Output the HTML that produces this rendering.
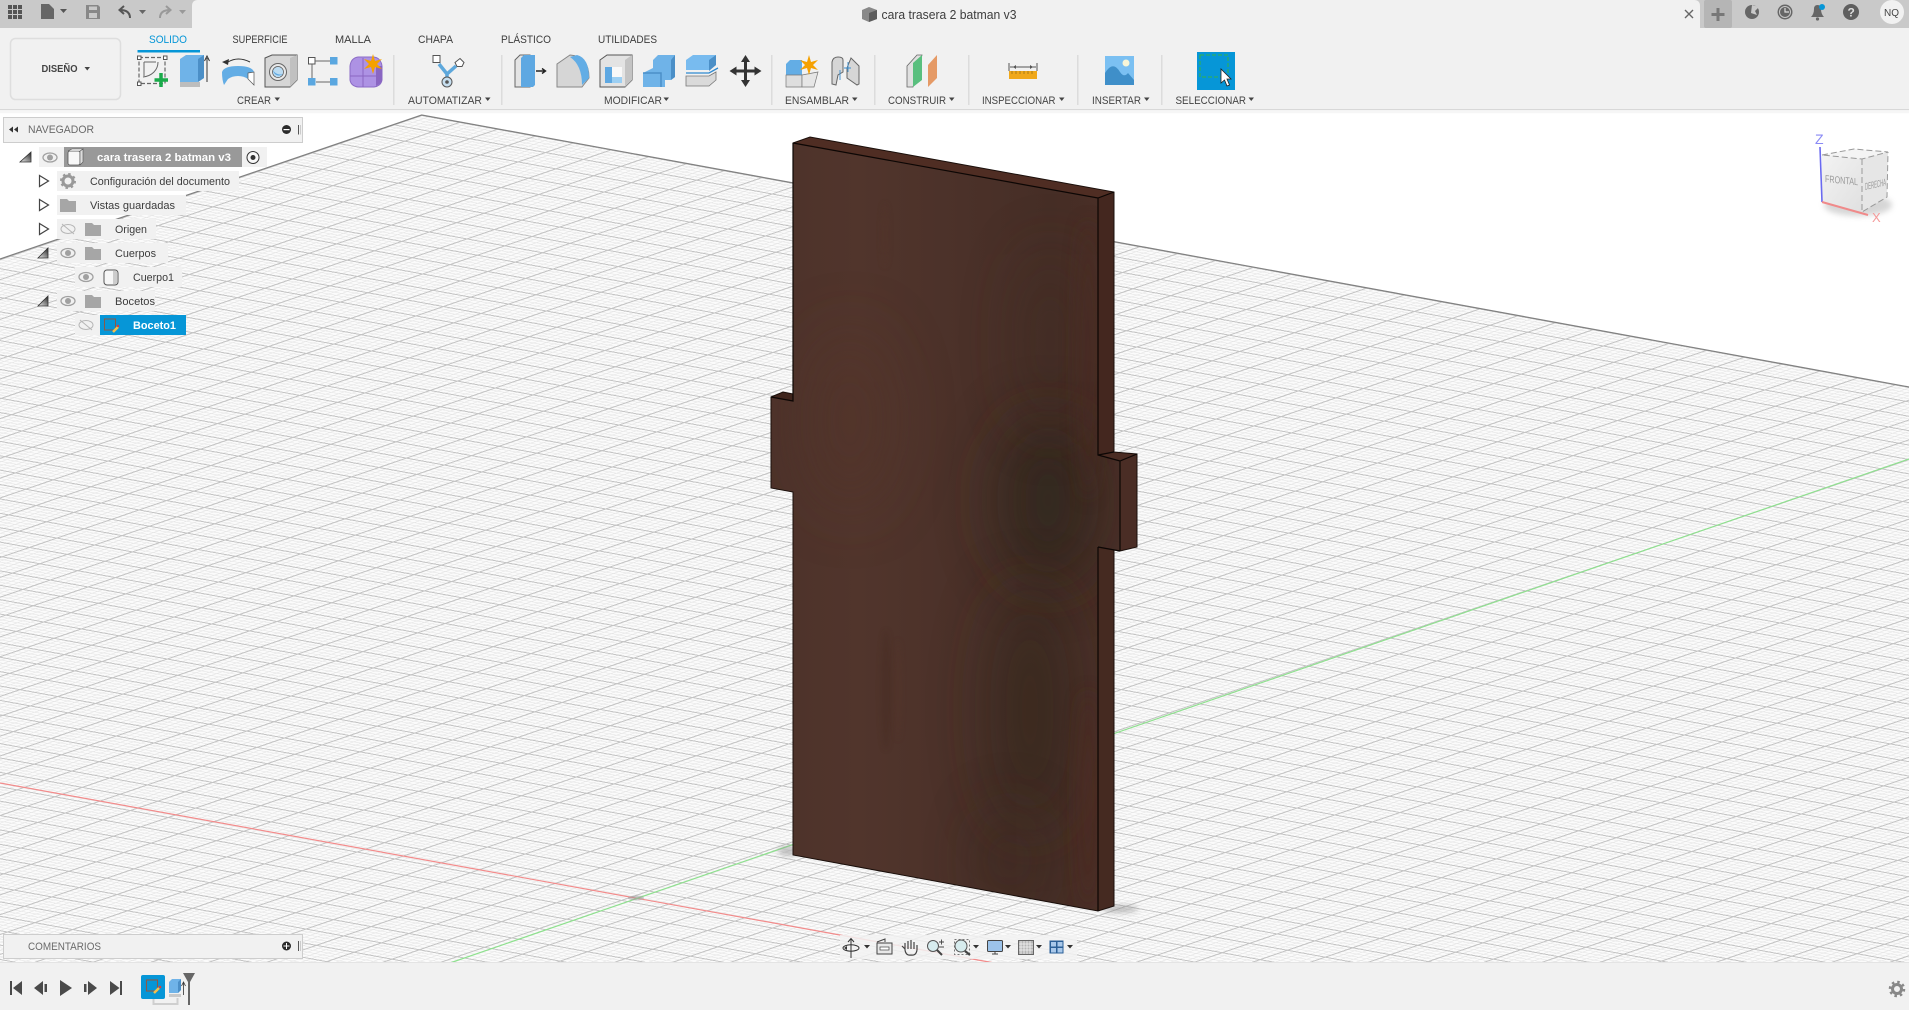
<!DOCTYPE html>
<html lang="es">
<head>
<meta charset="utf-8">
<title>cara trasera 2 batman v3</title>
<style>
html,body{margin:0;padding:0;background:#fff;overflow:hidden}
svg{display:block;position:absolute;left:0;top:0}
text{font-family:"Liberation Sans",sans-serif;fill:#3d3d3d}
.l{font-size:11px;fill:#444}
.n{font-size:11px;fill:#3c3c3c}
</style>
</head>
<body>
<svg width="1909" height="1010" viewBox="0 0 1909 1010" xmlns="http://www.w3.org/2000/svg">
<defs>
<pattern id="grid" patternUnits="userSpaceOnUse" width="1" height="1" patternTransform="matrix(37.78 6.91 -27.4 9.38 421.7 115)">
<rect width="1" height="1" fill="#fbfbfb"/>
<g fill="#e5e5e5">
<rect x="0" y=".2" width="1" height=".04"/><rect x="0" y=".4" width="1" height=".04"/><rect x="0" y=".6" width="1" height=".04"/><rect x="0" y=".8" width="1" height=".04"/>
<rect x=".2" y="0" width=".03" height="1"/><rect x=".4" y="0" width=".03" height="1"/><rect x=".6" y="0" width=".03" height="1"/><rect x=".8" y="0" width=".03" height="1"/>
</g>
<g fill="#c4c4c4">
<rect x="0" y="0" width="1" height=".07"/>
<rect x="0" y="0" width=".055" height="1"/>
</g>
</pattern>
<linearGradient id="wood" x1="0" x2="1" y1="0" y2="0">
<stop offset="0" stop-color="#4d322a"/>
<stop offset=".25" stop-color="#51352c"/>
<stop offset=".55" stop-color="#4b3129"/>
<stop offset=".8" stop-color="#462e26"/>
<stop offset="1" stop-color="#4b2f27"/>
</linearGradient>
<filter id="b" filterUnits="userSpaceOnUse" x="650" y="50" width="600" height="1000"><feGaussianBlur stdDeviation="30"/></filter>
<filter id="b2" filterUnits="userSpaceOnUse" x="650" y="50" width="600" height="1000"><feGaussianBlur stdDeviation="9"/></filter>
<filter id="b3" filterUnits="userSpaceOnUse" x="650" y="50" width="1259" height="1000"><feGaussianBlur stdDeviation="3"/></filter>
<clipPath id="face"><polygon points="793,143 1098,198 1098,455 1120,461 1120,551 1098,547 1098,911 793,855 793,492 771,488 771,397 793,401"/></clipPath>
<linearGradient id="tri" x1="0" x2="1" y1="1" y2="0"><stop offset="0" stop-color="#eee"/><stop offset="1" stop-color="#222"/></linearGradient>
<linearGradient id="cubef" x1="0" x2="1" y1="0" y2="1"><stop offset="0" stop-color="#f3f3f3"/><stop offset="1" stop-color="#e0e0e0"/></linearGradient>
</defs>

<!-- viewport -->
<rect width="1909" height="1010" fill="#fff"/>
<polygon points="421.7,115 0,259 0,1010 1909,1010 1909,387" fill="url(#grid)"/>
<path d="M0,259 L421.7,115 L1909,387" fill="none" stroke="#808080" stroke-width="1.2"/>
<!-- axes -->
<path d="M0,783 L1000,964" stroke="#f28b8b" stroke-width="1.2" fill="none"/>
<path d="M447,964 L1909,459" stroke="#8fe08f" stroke-width="1.2" fill="none"/>
<ellipse cx="636" cy="898" rx="8" ry="2.500" fill="#999" opacity=".5"/>
<!-- shadows -->
<ellipse cx="1120" cy="909" rx="18" ry="3.500" fill="#888" opacity=".55" filter="url(#b3)"/>
<ellipse cx="788" cy="851" rx="10" ry="5" fill="#888" opacity=".5" filter="url(#b3)"/>

<!-- board -->
<polygon points="793,143 810,137 1114,192 1098,198" fill="#4f2d23"/>
<polygon points="771,397 783,392 793,394 793,401" fill="#3f251d"/>
<polygon points="1098,198 1114,192 1114,452 1098,455" fill="#44271f"/>
<polygon points="1098,455 1114,452 1137,454 1120,461" fill="#4b2c23"/>
<polygon points="1120,461 1137,454 1137,547 1120,551" fill="#4a2d25"/>
<polygon points="1098,547 1114,550 1114,906 1098,911" fill="#452a21"/>
<polygon points="793,143 1098,198 1098,455 1120,461 1120,551 1098,547 1098,911 793,855 793,492 771,488 771,397 793,401" fill="url(#wood)"/>
<g clip-path="url(#face)">
<ellipse cx="1048" cy="500" rx="52" ry="85" fill="#2f251b" opacity=".72" filter="url(#b)"/>
<ellipse cx="1030" cy="710" rx="40" ry="125" fill="#33261d" opacity=".6" filter="url(#b)"/>
<ellipse cx="1010" cy="860" rx="28" ry="55" fill="#35261d" opacity=".45" filter="url(#b)"/>
<ellipse cx="1050" cy="340" rx="30" ry="95" fill="#3e2a21" opacity=".45" filter="url(#b)"/>
<ellipse cx="1088" cy="800" rx="9" ry="110" fill="#4e2c24" opacity=".7" filter="url(#b2)"/>
<ellipse cx="1088" cy="360" rx="10" ry="140" fill="#4a2a21" opacity=".6" filter="url(#b2)"/>
<ellipse cx="850" cy="420" rx="42" ry="90" fill="#54362c" opacity=".5" filter="url(#b)"/>
<ellipse cx="886" cy="690" rx="5" ry="60" fill="#3f271f" opacity=".3" filter="url(#b3)"/>
<ellipse cx="898" cy="690" rx="3" ry="50" fill="#54352b" opacity=".45" filter="url(#b3)"/>
<ellipse cx="885" cy="235" rx="3" ry="32" fill="#54352b" opacity=".45" filter="url(#b3)"/>
</g>
<path d="M793,143 L810,137 L1114,192 L1114,452 L1137,454 L1137,547 L1120,551 L1114,550 L1114,906 L1098,911 L793,855 L793,492 L771,488 L771,397 L783,392 L793,394Z" fill="none" stroke="#1a0f0b" stroke-width="1"/>
<path d="M793,143 L1098,198 L1114,192 M1098,198 L1098,455 L1120,461 L1137,454 M1120,461 L1120,551 M1098,547 L1120,551 M1098,547 L1098,911 M793,143 L793,401 L771,397 M1098,455 L1114,452" fill="none" stroke="#0c0604" stroke-width="1.2"/>

<!-- view cube -->
<ellipse cx="1858" cy="205" rx="34" ry="11" fill="#999" opacity=".4" filter="url(#b3)"/>
<polygon points="1822,155 1854,149 1888,152 1862,159" fill="#f4f4f4"/>
<polygon points="1822,155 1862,159 1862,212 1822,202" fill="url(#cubef)"/>
<polygon points="1862,159 1888,152 1887,197 1862,212" fill="#e6e6e6"/>
<path d="M1822,155 L1854,149 L1888,152 L1862,159 Z M1862,159 L1862,212 L1887,197 L1888,152" fill="none" stroke="#999" stroke-width="1" stroke-dasharray="6 3"/>
<text transform="matrix(1 .1 0 1 1825 182)" font-size="10" textLength="33" lengthAdjust="spacingAndGlyphs" style="fill:#999">FRONTAL</text>
<text transform="matrix(1 -.22 0 1 1865 190)" font-size="10" textLength="21" lengthAdjust="spacingAndGlyphs" style="fill:#999">DERECHA</text>
<path d="M1820,147 L1822,202" stroke="#6a6af0" stroke-width="1.600" fill="none"/>
<path d="M1822,202 L1868,215" stroke="#f08a8a" stroke-width="2" fill="none"/>
<text x="1815" y="144" font-size="14" style="fill:#8a8af5">Z</text>
<text x="1872" y="222" font-size="13" style="fill:#f59a9a">X</text>

<!-- toolbar -->
<rect y="0" width="1909" height="109" fill="#f1f1f1"/>
<rect y="109" width="1909" height="1.200" fill="#d8d8d8"/>
<rect y="110.200" width="1909" height="3" fill="#f6f6f6"/>
<path d="M0,0 H1909 V28 H1700 V6 Q1700,0 1694,0 H198 Q192,0 192,6 V28 H0 Z" fill="#c9c9c9"/>
<rect x="1704" y="0" width="28" height="28" fill="#b5b5b5" rx="2"/>

<!-- title bar left icons -->
<g fill="#555">
<rect x="8" y="5" width="4" height="4"/><rect x="13" y="5" width="4" height="4"/><rect x="18" y="5" width="4" height="4"/>
<rect x="8" y="10" width="4" height="4"/><rect x="13" y="10" width="4" height="4"/><rect x="18" y="10" width="4" height="4"/>
<rect x="8" y="15" width="4" height="4"/><rect x="13" y="15" width="4" height="4"/><rect x="18" y="15" width="4" height="4"/>
<path d="M41,4 H49 L54,9 V19 H41 Z" fill="#666"/>
<path d="M60,9 H67 L63.500,13 Z"/>
<path d="M86,5 H98 L100,7 V19 H86 Z M89,6.500 V10 H97 V6.500 Z M89,13 V18 H97 V13 Z" fill="#888" fill-rule="evenodd"/>
<path d="M139,10 H146 L142.500,14 Z" fill="#666"/>
<path d="M179,10 H186 L182.500,14 Z" fill="#999"/>
</g>
<path d="M130,18 C130,12 126,10 120,10 M124,6 L119.500,10 L124,14" fill="none" stroke="#555" stroke-width="2"/>
<path d="M160,18 C160,12 164,10 170,10 M166,6 L170.500,10 L166,14" fill="none" stroke="#999" stroke-width="2"/>

<!-- title -->
<path d="M862,10 L869,7 L877,10 V19 L869,22 L862,19 Z" fill="#888"/>
<path d="M869,13 L877,10 V19 L869,22 Z" fill="#5c5c5c"/>
<text x="881.500" y="19" font-size="12.500" textLength="135" lengthAdjust="spacingAndGlyphs">cara trasera 2 batman v3</text>
<path d="M1685,10 L1693,18 M1693,10 L1685,18" stroke="#666" stroke-width="1.400"/>
<path d="M1718,8 V21 M1711.500,14.500 H1724.500" stroke="#777" stroke-width="3"/>

<!-- title bar right icons -->
<circle cx="1752" cy="12" r="7" fill="#666"/>
<path d="M1752,5 L1759,7 L1755,11 L1757,15 L1751,13Z" fill="#c9c9c9"/>
<circle cx="1785" cy="12" r="7.500" fill="#666"/><circle cx="1785" cy="12" r="5.500" fill="none" stroke="#c9c9c9"/><path d="M1785,8 V12 H1789" stroke="#ddd" fill="none" stroke-width="1.200"/>
<path d="M1811,17 Q1814,14 1814,9 Q1814,5 1817.500,5 Q1821,5 1821,9 Q1821,14 1824,17 Z" fill="#666"/><circle cx="1817.500" cy="19" r="1.600" fill="#666"/><circle cx="1822" cy="7" r="3" fill="#0696d7"/>
<circle cx="1851" cy="12" r="8" fill="#5f5f5f"/><text x="1847.500" y="16.500" font-size="12" font-weight="bold" style="fill:#ddd">?</text>
<circle cx="1892" cy="12" r="12" fill="#f1f1f1"/><text x="1884" y="16" font-size="10.500" textLength="15" lengthAdjust="spacingAndGlyphs" style="fill:#444">NQ</text>

<!-- design button -->
<rect x="10.500" y="38.500" width="110" height="61" rx="5" fill="#f1f1f1" stroke="#dedede" stroke-width="1.500"/>
<text x="41.500" y="72" font-size="10.500" font-weight="bold" textLength="36" lengthAdjust="spacingAndGlyphs" style="fill:#444">DISEÑO</text>
<path d="M84.500,67 H90 L87.250,70.500 Z" fill="#444"/>

<!-- tabs -->
<text x="149" y="43" class="n" textLength="38" lengthAdjust="spacingAndGlyphs" style="fill:#0696d7">SOLIDO</text>
<rect x="137.500" y="50" width="62.500" height="2.500" fill="#0696d7"/>
<text x="232.500" y="43" class="n" textLength="55" lengthAdjust="spacingAndGlyphs">SUPERFICIE</text>
<text x="335" y="43" class="n" textLength="36" lengthAdjust="spacingAndGlyphs">MALLA</text>
<text x="418" y="43" class="n" textLength="35" lengthAdjust="spacingAndGlyphs">CHAPA</text>
<text x="501" y="43" class="n" textLength="50" lengthAdjust="spacingAndGlyphs">PLÁSTICO</text>
<text x="598" y="43" class="n" textLength="59" lengthAdjust="spacingAndGlyphs">UTILIDADES</text>

<!-- separators -->
<g fill="#dcdcdc">
<rect x="393" y="55" width="1.500" height="50"/><rect x="501" y="55" width="1.500" height="50"/><rect x="771" y="55" width="1.500" height="50"/><rect x="874" y="55" width="1.500" height="50"/><rect x="968" y="55" width="1.500" height="50"/><rect x="1077" y="55" width="1.500" height="50"/><rect x="1161" y="55" width="1.500" height="50"/>
</g>

<!-- group labels -->
<g>
<text x="237" y="104" class="l" textLength="34" lengthAdjust="spacingAndGlyphs">CREAR</text><path d="M274.500,97.500 H280 L277.250,101 Z" fill="#444"/>
<text x="408" y="104" class="l" textLength="74" lengthAdjust="spacingAndGlyphs">AUTOMATIZAR</text><path d="M485,97.500 H490.500 L487.750,101 Z" fill="#444"/>
<text x="604" y="104" class="l" textLength="58" lengthAdjust="spacingAndGlyphs">MODIFICAR</text><path d="M663.500,97.500 H669 L666.250,101 Z" fill="#444"/>
<text x="785" y="104" class="l" textLength="64" lengthAdjust="spacingAndGlyphs">ENSAMBLAR</text><path d="M852,97.500 H857.500 L854.750,101 Z" fill="#444"/>
<text x="888" y="104" class="l" textLength="58" lengthAdjust="spacingAndGlyphs">CONSTRUIR</text><path d="M949,97.500 H954.500 L951.750,101 Z" fill="#444"/>
<text x="982" y="104" class="l" textLength="73.500" lengthAdjust="spacingAndGlyphs">INSPECCIONAR</text><path d="M1059,97.500 H1064.500 L1061.750,101 Z" fill="#444"/>
<text x="1092" y="104" class="l" textLength="49" lengthAdjust="spacingAndGlyphs">INSERTAR</text><path d="M1144,97.500 H1149.500 L1146.750,101 Z" fill="#444"/>
<text x="1175.500" y="104" class="l" textLength="70.500" lengthAdjust="spacingAndGlyphs">SELECCIONAR</text><path d="M1248.500,97.500 H1254 L1251.250,101 Z" fill="#444"/>
</g>

<!-- Sketch -->
<rect x="139" y="57.500" width="26" height="26" fill="none" stroke="#666" stroke-width="1.200" stroke-dasharray="4 2"/>
<g fill="#fff" stroke="#555"><rect x="137.500" y="56" width="3.500" height="3.500"/><rect x="163.500" y="56" width="3.500" height="3.500"/><rect x="137.500" y="82" width="3.500" height="3.500"/></g>
<path d="M143,77 C152,76 158,70 158,62 M144,62 H156 M144,62 V76" fill="none" stroke="#666" stroke-width="1"/>
<path d="M161,73 V87 M154.500,80 H168" stroke="#1aab4a" stroke-width="3.500"/>
<!-- Extrude -->
<polygon points="180,59 186,55 204,55 204,78 198,82 180,82" fill="#6fb3e8"/>
<polygon points="198,59 204,55 204,78 198,82" fill="#4b8fc7"/>
<rect x="180" y="82" width="20" height="5" fill="#bdbdbd"/>
<path d="M207,82 V58 M204.500,61 L207,56 L209.500,61" stroke="#333" stroke-width="1" fill="none"/>
<!-- Revolve -->
<path d="M222,72 Q224,66 238,66 Q252,66 254,72 L254,85 L248,79 Q244,76 238,76 Q232,76 228,79 L224,85 Q222,80 222,72Z" fill="#63ade5"/>
<path d="M228,62 Q238,56 250,62" fill="none" stroke="#333" stroke-width="1"/>
<path d="M222,62 L229,59 L228,65Z" fill="#333"/>
<path d="M248,73 L254,72 V85 L248,79Z" fill="#fff" stroke="#555" stroke-width=".7"/>
<!-- Hole -->
<polygon points="265,58 272,55 297,55 297,80 290,87 265,87" fill="#d6d6d6" stroke="#555"/>
<polygon points="290,58 297,55 297,80 290,87" fill="#c0c0c0"/>
<circle cx="278" cy="72" r="8.500" fill="#e8e8e8" stroke="#666"/><circle cx="278" cy="72" r="5.500" fill="#bcdcf2" stroke="#555" stroke-width=".7"/><path d="M273,70 A6,6 0 0 0 283,74 A8,8 0 0 1 273,70Z" fill="#5ea8e2"/>
<!-- rect pattern -->
<rect x="308.500" y="57.500" width="6.500" height="6.500" fill="#fff" stroke="#555"/>
<rect x="330" y="57" width="7.500" height="7.500" fill="#5aa7e0"/>
<rect x="308" y="78" width="7.500" height="7.500" fill="#5aa7e0"/>
<rect x="330" y="78" width="7.500" height="7.500" fill="#5aa7e0"/>
<path d="M315,61 H330 M312,64 V78 M316,82 H330" stroke="#666" stroke-width="1"/>
<!-- Purple -->
<path d="M350,66 Q351,58 358,57 H374 Q381,58 382,66 V80 Q381,86 374,87 H358 Q351,86 350,80 Z" fill="#ad92e4" stroke="#8c6cc6"/>
<path d="M376,66 H382 V80 Q381,84 376,86Z" fill="#8a66c2"/>
<path d="M350,76 H376 M363,58 V87" stroke="#8a66c2" stroke-width="1"/>
<path d="M373,54 L375,61 L382,59 L377,64 L382,69 L375,67 L373,74 L371,67 L364,69 L369,64 L364,59 L371,61Z" fill="#f5a100"/>
<!-- Automate -->
<rect x="433" y="55.500" width="7" height="7" fill="#fff" stroke="#555"/>
<path d="M460,58.500 l4,4 l-2,4 l-5,0 l-2,-4Z" fill="#fff" stroke="#555"/>
<path d="M439,64 L447,74 L456,66 M447,74 V80" fill="none" stroke="#5ea8dc" stroke-width="3.500"/>
<circle cx="447" cy="82" r="5" fill="#c7dff0" stroke="#555"/><circle cx="447" cy="82" r="1.800" fill="#555"/>
<!-- Press pull -->
<polygon points="515,60 520,55 530,55 530,87 515,87" fill="#e4e4e4" stroke="#666"/>
<polygon points="521,87 521,58 524,55 535,55 535,85 533,87" fill="#5ea8e2"/>
<path d="M536,71 H545 M542,68.500 L545.500,71 L542,73.500" stroke="#222" stroke-width="1.400" fill="none"/>
<!-- Fillet -->
<path d="M557,87 V64 L570,55 Q589,56 589,78 L582,87 Z" fill="#d6d6d6" stroke="#888"/>
<path d="M570,57 L577,55 Q589,58 589,78 L582,85 Q582,65 570,57Z" fill="#63ade5"/>
<!-- Shell -->
<polygon points="600,60 607,55 632,55 632,80 625,87 600,87" fill="#e3e3e3" stroke="#555"/>
<polygon points="625,60 632,55 632,80 625,87" fill="#c4c4c4"/>
<rect x="605" y="67" width="17" height="16" fill="#f8f8f8"/>
<path d="M605,67 H612 V77 H622 V83 H605Z" fill="#5ea8e2"/>
<path d="M612,77 H622 V83 H612Z" fill="#9ccff3"/>
<!-- Combine -->
<polygon points="653,60 658,55 675,55 675,77 671,80 665,80 665,87 643,87 643,73 653,68" fill="#6fb3e8"/>
<polygon points="671,60 675,55 675,77 671,80" fill="#4b8fc7"/>
<path d="M643,73 H661 V87" fill="none" stroke="#4b8fc7" stroke-width="1.500"/>
<!-- Offset -->
<polygon points="686,60 693,55 716,55 716,65 709,70 686,70" fill="#78bbef"/>
<polygon points="709,60 716,55 716,65 709,71" fill="#4b8fc7"/>
<polygon points="686,76 709,76 716,72 716,80 709,86 686,86" fill="#dadada" stroke="#777" stroke-width=".8"/>
<path d="M686,73 H709 L718,68" stroke="#2f89cf" stroke-width="1.300" fill="none"/>
<!-- Move -->
<path d="M745.500,55 L750,62 H747 V69.500 H754.500 V66.500 L761.500,71 L754.500,75.500 V72.500 H747 V80 H750 L745.500,87 L741,80 H744 V72.500 H736.500 V75.500 L729.500,71 L736.500,66.500 V69.500 H744 V62 H741Z" fill="#333"/>
<!-- Assemble -->
<polygon points="786,64 790,60 802,60 802,75 786,75" fill="#63ade5"/>
<polygon points="786,75 802,75 802,87 786,87" fill="#dedede" stroke="#777" stroke-width=".7"/>
<polygon points="802,75 818,72 814,87 802,87" fill="#e6e6e6" stroke="#777" stroke-width=".7"/>
<path d="M809,55 L811,62 L818,60 L813,65 L818,70 L811,68 L809,75 L807,68 L800,70 L805,65 L800,60 L807,62Z" fill="#f5a100"/>
<!-- Joint -->
<path d="M832,84 V62 Q833,57 838,57 Q843,57 843,60 V72 L838,75 L836,85Z" fill="#d6d6d6" stroke="#666"/>
<path d="M859,84 V66 L851,58 L847,68 V78 L857,85Z" fill="#d6d6d6" stroke="#666"/>
<path d="M840,70 V80 M848,62 V72 M844,68 H851" stroke="#3a8ecf" stroke-width=".9"/>
<!-- Construct -->
<polygon points="907,66 917,55 922,55 913,87 907,87" fill="#e0e0e0" stroke="#666" stroke-width=".8"/>
<polygon points="913,87 913,63 922,55 922,80" fill="#59bf7e"/>
<polygon points="928,87 928,65 937,55 937,78" fill="#e59a66"/>
<!-- Inspect -->
<rect x="1009" y="71" width="28" height="8" fill="#f0a81a"/>
<path d="M1009,63 V71 M1037,63 V71 M1010,67 H1036" stroke="#555" stroke-width="1" fill="none"/>
<path d="M1013,67 l3,-2 v4Z M1033,67 l-3,-2 v4Z" fill="#555"/>
<path d="M1012,71 v3 M1016,71 v3 M1020,71 v3 M1024,71 v3 M1028,71 v3 M1032,71 v3" stroke="#8a6a14" stroke-width=".7"/>
<!-- Insert -->
<rect x="1105" y="56" width="29" height="29" fill="#7bc0f2"/>
<path d="M1105,85 V73 Q1113,60 1120,72 Q1124,78 1128,73 L1134,80 V85Z" fill="#3f8fc9"/>
<circle cx="1126" cy="63" r="3.500" fill="#f8f6d8"/>
<!-- Select -->
<rect x="1197" y="52" width="38" height="38" fill="#0696d7"/>
<rect x="1200" y="55" width="28" height="22" fill="none" stroke="#36b24a" stroke-width="1" stroke-dasharray="4 2"/>
<path d="M1221,69 L1221,83 L1224.500,80 L1227,86 L1229.500,85 L1227,79 L1231,79Z" fill="#fff" stroke="#222" stroke-width=".8"/>

<!-- Navigator -->
<rect x="3.500" y="117.500" width="299" height="25" fill="#f1f1f1" stroke="#cdcdcd"/>
<path d="M13,126.500 L9,129.500 L13,132.500Z M18,126.500 L14,129.500 L18,132.500Z" fill="#333"/>
<text x="28" y="133" font-size="11" textLength="66" lengthAdjust="spacingAndGlyphs" style="fill:#6a6a6a">NAVEGADOR</text>
<circle cx="286.500" cy="129.500" r="4.500" fill="#2a2a2a"/><rect x="283.500" y="129" width="6" height="1.200" fill="#fff"/>
<path d="M298.500,125 V134.500" stroke="#555"/><path d="M300.500,125 V134.500" stroke="#ccc"/>

<!-- tree backgrounds -->
<g fill="#f1f1f1">
<rect x="39" y="147" width="228" height="20"/>
<rect x="57" y="171" width="182" height="20"/>
<rect x="57" y="195" width="129" height="20"/>
<rect x="57" y="219" width="99" height="20"/>
<rect x="57" y="243" width="111" height="20"/>
<rect x="75" y="267" width="107" height="20"/>
<rect x="57" y="291" width="98" height="20"/>
<rect x="75" y="315" width="25" height="20"/>
</g>
<!-- row 1 -->
<polygon points="20,162 31,162 31,152" fill="url(#tri)" stroke="#333" stroke-width=".8"/>
<g><ellipse cx="50" cy="157.500" rx="7" ry="4.500" fill="none" stroke="#a0a0a0" stroke-width="1.300"/><circle cx="50" cy="157.500" r="3" fill="#a0a0a0"/></g>
<rect x="64" y="147" width="178" height="20" fill="#999"/>
<rect x="68" y="151" width="12" height="14" rx="2" fill="#f8f8f8" stroke="#555" stroke-width=".8"/><path d="M80,151 L83,149 V162 L80,165Z" fill="#ddd" stroke="#555" stroke-width=".6"/>
<path d="M68,151 L72,149 H83 L80,151Z" fill="#fff" stroke="#555" stroke-width=".6"/>
<text x="97" y="161" font-size="11" font-weight="bold" textLength="134" lengthAdjust="spacingAndGlyphs" style="fill:#fff">cara trasera 2 batman v3</text>
<circle cx="253" cy="157.500" r="6" fill="#f8f8f8" stroke="#333"/><circle cx="253" cy="157.500" r="2.500" fill="#333"/>
<!-- row 2 -->
<polygon points="39.500,175.500 48.500,181 39.500,186.500" fill="#fff" stroke="#444" stroke-width="1.200"/>
<circle cx="68" cy="181" r="5" fill="none" stroke="#999" stroke-width="3"/><circle cx="68" cy="181" r="7" fill="none" stroke="#999" stroke-width="2" stroke-dasharray="2.500 3"/>
<text x="90" y="185" class="n" textLength="140" lengthAdjust="spacingAndGlyphs">Configuración del documento</text>
<!-- row 3 -->
<polygon points="39.500,199.500 48.500,205 39.500,210.500" fill="#fff" stroke="#444" stroke-width="1.200"/>
<path d="M60,199 H67 L69,201 H76 V212 H60Z" fill="#a6a6a6"/>
<text x="90" y="209" class="n" textLength="85" lengthAdjust="spacingAndGlyphs">Vistas guardadas</text>
<!-- row 4 -->
<polygon points="39.500,223.500 48.500,229 39.500,234.500" fill="#fff" stroke="#444" stroke-width="1.200"/>
<ellipse cx="68" cy="229" rx="7" ry="4.500" fill="none" stroke="#b5b5b5"/><path d="M62,224 L74,234" stroke="#b5b5b5"/>
<path d="M85,223 H92 L94,225 H101 V236 H85Z" fill="#a6a6a6"/>
<text x="115" y="233" class="n" textLength="32" lengthAdjust="spacingAndGlyphs">Origen</text>
<!-- row 5 -->
<polygon points="38,258 48,258 48,248" fill="url(#tri)" stroke="#333" stroke-width=".8"/>
<ellipse cx="68" cy="253" rx="7" ry="4.500" fill="none" stroke="#a0a0a0" stroke-width="1.300"/><circle cx="68" cy="253" r="3" fill="#a0a0a0"/>
<path d="M85,247 H92 L94,249 H101 V260 H85Z" fill="#a6a6a6"/>
<text x="115" y="257" class="n" textLength="41" lengthAdjust="spacingAndGlyphs">Cuerpos</text>
<!-- row 6 -->
<ellipse cx="86" cy="277" rx="7" ry="4.500" fill="none" stroke="#a0a0a0" stroke-width="1.300"/><circle cx="86" cy="277" r="3" fill="#a0a0a0"/>
<rect x="104" y="270" width="14" height="15" rx="3" fill="#f6f6f6" stroke="#555"/><rect x="113" y="271" width="4" height="13" fill="#ccc"/>
<text x="133" y="281" class="n" textLength="41" lengthAdjust="spacingAndGlyphs">Cuerpo1</text>
<!-- row 7 -->
<polygon points="38,306 48,306 48,296" fill="url(#tri)" stroke="#333" stroke-width=".8"/>
<ellipse cx="68" cy="301" rx="7" ry="4.500" fill="none" stroke="#a0a0a0" stroke-width="1.300"/><circle cx="68" cy="301" r="3" fill="#a0a0a0"/>
<path d="M85,295 H92 L94,297 H101 V308 H85Z" fill="#a6a6a6"/>
<text x="115" y="305" class="n" textLength="40" lengthAdjust="spacingAndGlyphs">Bocetos</text>
<!-- row 8 -->
<ellipse cx="86" cy="325" rx="7" ry="4.500" fill="none" stroke="#b5b5b5"/><path d="M80,320 L92,330" stroke="#b5b5b5"/>
<rect x="100" y="315" width="86" height="20" fill="#0696d7"/>
<rect x="104.500" y="319" width="11" height="11" fill="none" stroke="#8a5a48" stroke-width="1"/>
<path d="M113,332 L118,327" stroke="#f2c14e" stroke-width="2.500"/><circle cx="118" cy="326" r="1.200" fill="#e03b3b"/>
<text x="133" y="329" font-size="11" font-weight="bold" textLength="43" lengthAdjust="spacingAndGlyphs" style="fill:#fff">Boceto1</text>

<!-- bottom bar -->
<rect y="963" width="1909" height="47" fill="#f1f1f1"/>
<rect y="962" width="1909" height="1" fill="#e4e4e4"/>
<rect x="3.500" y="934.500" width="299" height="24" fill="#f1f1f1" stroke="#cdcdcd"/>
<text x="28" y="950" font-size="11" textLength="73" lengthAdjust="spacingAndGlyphs" style="fill:#6a6a6a">COMENTARIOS</text>
<circle cx="286.500" cy="946" r="4.500" fill="#2a2a2a"/><path d="M283.500,946 H289.500 M286.500,943 V949" stroke="#fff" stroke-width="1"/>
<path d="M298.500,941 V951" stroke="#555"/><path d="M300.500,941 V951" stroke="#ccc"/>

<!-- timeline controls -->
<g fill="#4a4a4a">
<rect x="10" y="981" width="2" height="14"/><path d="M22,981 V995 L13,988Z"/>
<path d="M34,988 L43,981 V995Z"/><rect x="44.500" y="984" width="2.500" height="8"/>
<path d="M60,980 L72,988 L60,996Z"/>
<rect x="84" y="984" width="2.500" height="8"/><path d="M88,981 L97,988 L88,995Z"/>
<path d="M110,981 L119.500,988 L110,995Z"/><rect x="120" y="981" width="2" height="14"/>
</g>
<rect x="141" y="975" width="24" height="24" rx="2" fill="#0696d7"/>
<rect x="146.500" y="980" width="11" height="11" fill="none" stroke="#8a5a48" stroke-width="1.100"/>
<path d="M154,993 L159,988" stroke="#f2c14e" stroke-width="2.500"/><circle cx="160" cy="987" r="1.300" fill="#e03b3b"/>
<polygon points="169,982 172,979 181,979 181,990 178,993 169,993" fill="#6fb3e8"/>
<polygon points="178,982 181,979 181,990 178,993" fill="#4b8fc7"/>
<rect x="169" y="994" width="12" height="3" fill="#c9c9c9"/>
<path d="M183.500,995 V983 M181.500,986 L183.500,982 L185.500,986" stroke="#333" stroke-width=".8" fill="none"/>
<path d="M153.500,999 V1004 H177.500 V998" fill="none" stroke="#cfcfcf" stroke-width="2"/>
<polygon points="183,973 195,973 190,982 188,982" fill="#666"/>
<rect x="188" y="978" width="2" height="27" fill="#666"/>
<!-- settings gear -->
<circle cx="1897" cy="989" r="4.500" fill="none" stroke="#888" stroke-width="3"/><circle cx="1897" cy="989" r="7" fill="none" stroke="#888" stroke-width="2.500" stroke-dasharray="2.500 3"/>

<!-- nav bar -->
<rect x="840" y="935" width="237" height="24" fill="#f2f2f2" opacity=".85"/>
<g>
<ellipse cx="851" cy="948" rx="8" ry="3.200" fill="none" stroke="#333"/>
<path d="M851,939 V958 M848,942 L851,938.500 L854,942" fill="none" stroke="#333"/>
<path d="M844,948 l3,-2 v4Z" fill="#333"/>
<path d="M864,945 H870 L867,948.500Z M973,945 H979 L976,948.500Z M1005,945 H1011 L1008,948.500Z M1036,945 H1042 L1039,948.500Z M1067,945 H1073 L1070,948.500Z" fill="#333"/>
<rect x="877" y="943" width="15" height="11" fill="#e8e8e8" stroke="#444"/><rect x="880" y="947" width="9" height="3" fill="#fff" stroke="#444" stroke-width=".7"/><path d="M877,942 L885,939 V942" stroke="#444" fill="none"/>
<path d="M905,950 V943 M908,949 V941 M911,949 V940 M914,949 V942 M917,950 V945 M905,950 Q906,956 911,955 Q916,956 917,950 M905,949 L902,946" fill="none" stroke="#444" stroke-width="1.200"/>
<circle cx="933" cy="946" r="5.500" fill="#d7ecee" stroke="#555"/><path d="M937,950 L942,955" stroke="#444" stroke-width="2"/><path d="M939,942 H944 M941.500,939.500 V944.500 M939,947 H944" stroke="#444" stroke-width=".9"/>
<rect x="954.500" y="939.500" width="15" height="15" fill="none" stroke="#777" stroke-dasharray="2 2"/><circle cx="961" cy="946" r="6" fill="#d7ecee" stroke="#555"/><path d="M965,951 L970,955" stroke="#444" stroke-width="2.200"/>
<rect x="987.500" y="940.500" width="15" height="11" rx="1" fill="#9cc3ea" stroke="#444"/><path d="M992,954 H998 M995,952 V954" stroke="#444"/>
<rect x="1018.500" y="940.500" width="15" height="14" fill="#b5b5b5" stroke="#666"/><path d="M1021,941 V954 M1024,941 V954 M1027,941 V954 M1030,941 V954 M1019,944 H1033 M1019,947 H1033 M1019,950 H1033" stroke="#f4f4f4" stroke-width=".8"/>
<rect x="1049.500" y="940.500" width="14" height="13" fill="#2b5f97"/><rect x="1051" y="942" width="5" height="4.500" fill="#a9c8ea"/><rect x="1057.500" y="942" width="5" height="4.500" fill="#a9c8ea"/><rect x="1051" y="948" width="5" height="4.500" fill="#a9c8ea"/><rect x="1057.500" y="948" width="5" height="4.500" fill="#a9c8ea"/>
</g>
</svg>
</body>
</html>
